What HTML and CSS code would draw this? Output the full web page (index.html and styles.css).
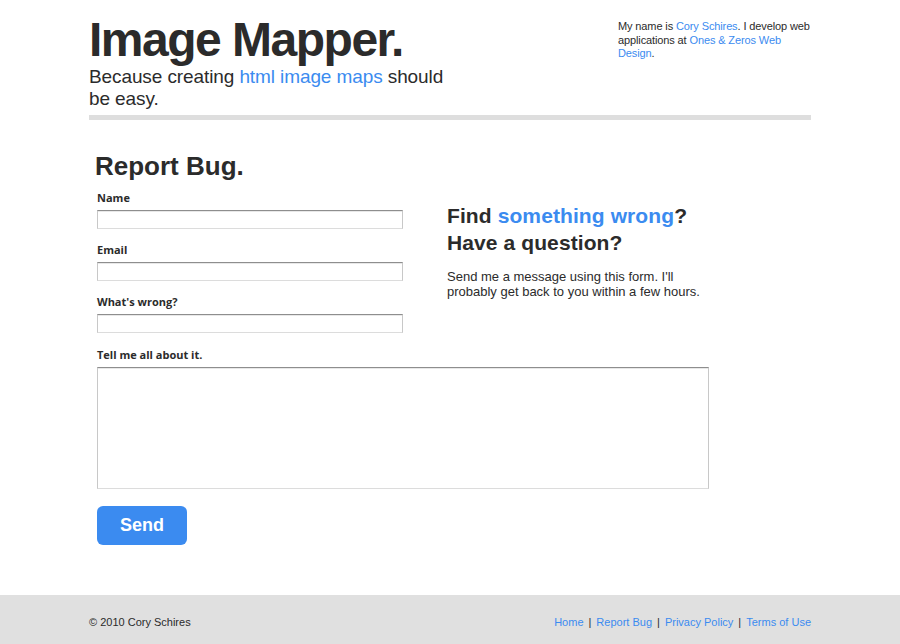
FILE: index.html
```html
<!DOCTYPE html>
<html lang="en">
<head>
<meta charset="utf-8">
<title>Image Mapper - Report Bug</title>
<link rel="stylesheet" href="styles.css">
</head>
<body>
<div class="page">
  <header class="header">
    <div class="brand">
      <h1 class="title">Image Mapper.</h1>
      <p class="tagline">Because creating <a href="#">html image maps</a> should be easy.</p>
    </div>
    <p class="about">My name is <a href="#">Cory Schires</a>. I develop web applications at <a href="#">Ones &amp; Zeros Web Design</a>.</p>
  </header>
  <div class="rule"></div>

  <main class="content">
    <h2 class="page-title">Report Bug.</h2>
    <form class="form">
      <div class="top">
        <div class="fields">
          <label class="label" for="name">Name</label>
          <input class="input" id="name" type="text">
          <label class="label" for="email">Email</label>
          <input class="input" id="email" type="text">
          <label class="label" for="wrong">What's wrong?</label>
          <input class="input" id="wrong" type="text">
        </div>
        <div class="aside">
          <h3 class="aside-title">Find <span class="hl">something wrong</span>?<br>Have a question?</h3>
          <p class="aside-text">Send me a message using this form. I'll probably get back to you within a few hours.</p>
        </div>
      </div>
      <label class="label label-wide" for="msg">Tell me all about it.</label>
      <textarea class="textarea" id="msg"></textarea>
      <button class="send" type="button">Send</button>
    </form>
  </main>
</div>

<footer class="footer">
  <div class="footer-inner">
    <span class="copy">© 2010 Cory Schires</span>
    <nav class="links">
      <a href="#">Home</a><span class="sep">|</span><a href="#">Report Bug</a><span class="sep">|</span><a href="#">Privacy Policy</a><span class="sep">|</span><a href="#">Terms of Use</a>
    </nav>
  </div>
</footer>
</body>
</html>
```

FILE: styles.css
```css
html, body {
  margin: 0;
  padding: 0;
  background: #fff;
}
body {
  font-family: "Liberation Sans", Arial, Helvetica, sans-serif;
  color: #2b2b2b;
}
a {
  color: #3b8bf0;
  text-decoration: none;
}
.page {
  width: 722px;
  margin: 0 auto;
}
.header {
  display: flex;
  justify-content: space-between;
  align-items: flex-start;
  padding-top: 16px;
}
.brand {
  width: 372px;
}
.title {
  margin: 0;
  font-size: 48px;
  line-height: 48px;
  font-weight: 700;
  letter-spacing: -1.5px;
  color: #2b2b2b;
}
.tagline {
  margin: 2px 0 0;
  font-size: 19px;
  line-height: 22px;
  letter-spacing: -0.1px;
}
.about {
  width: 193px;
  margin: 4px 0 0;
  font-size: 11px;
  line-height: 13.5px;
  letter-spacing: -0.12px;
}
.rule {
  height: 5px;
  background: #dedede;
  margin-top: 5px;
}
.content {
  padding: 31px 0 0 8px;
}
.page-title {
  margin: 0 0 10px -2px;
  font-size: 26px;
  line-height: 30px;
  font-weight: 700;
}
.form {
  display: flex;
  flex-direction: column;
  align-items: flex-start;
}
.top {
  display: flex;
  gap: 44px;
}
.fields {
  display: flex;
  flex-direction: column;
  width: 306px;
}
.label {
  display: block;
  font-family: "Open Sans", "DejaVu Sans", sans-serif;
  font-weight: 700;
  font-size: 11px;
  line-height: 14px;
  color: #2b2b2b;
  margin-bottom: 5px;
}
.label-wide {
  margin-top: 1px;
}
.input {
  box-sizing: border-box;
  width: 306px;
  height: 19px;
  margin: 0 0 14px;
  padding: 0 3px;
  border: 1px solid;
  border-color: #8e8e8e #c8c8c8 #dcdcdc #c8c8c8;
  box-shadow: inset 0 1px 0 #e8e8e8;
  background: #fff;
  font: 12px "Liberation Sans", Arial, sans-serif;
}
.aside {
  padding-top: 12px;
  width: 264px;
}
.aside-title {
  margin: 0;
  font-size: 21px;
  line-height: 26.5px;
  font-weight: 700;
  letter-spacing: 0.1px;
  white-space: nowrap;
}
.hl {
  color: #3b8bf0;
}
.aside-text {
  margin: 13px 0 0;
  font-size: 13px;
  line-height: 15px;
}
.textarea {
  box-sizing: border-box;
  display: block;
  width: 612px;
  height: 122px;
  margin: 0;
  padding: 3px;
  border: 1px solid;
  border-color: #8e8e8e #c8c8c8 #dcdcdc #c8c8c8;
  box-shadow: inset 0 1px 0 #e8e8e8;
  resize: none;
  background: #fff;
  font: 12px "Liberation Sans", Arial, sans-serif;
}
.send {
  margin-top: 17px;
  width: 90px;
  height: 39px;
  border: 0;
  border-radius: 6px;
  background: #3b8bf0;
  color: #fff;
  font-family: "Liberation Sans", Arial, sans-serif;
  font-weight: 700;
  font-size: 18px;
  padding: 0;
}
.footer {
  margin-top: 50px;
  background: #e0e0e0;
  padding: 19px 0 14px;
}
.footer-inner {
  width: 722px;
  margin: 0 auto;
  display: flex;
  justify-content: space-between;
  font-size: 11px;
  line-height: 16px;
  color: #2b2b2b;
}
.links {
  display: flex;
}
.sep {
  color: #2b2b2b;
  margin: 0 5px;
}
```
